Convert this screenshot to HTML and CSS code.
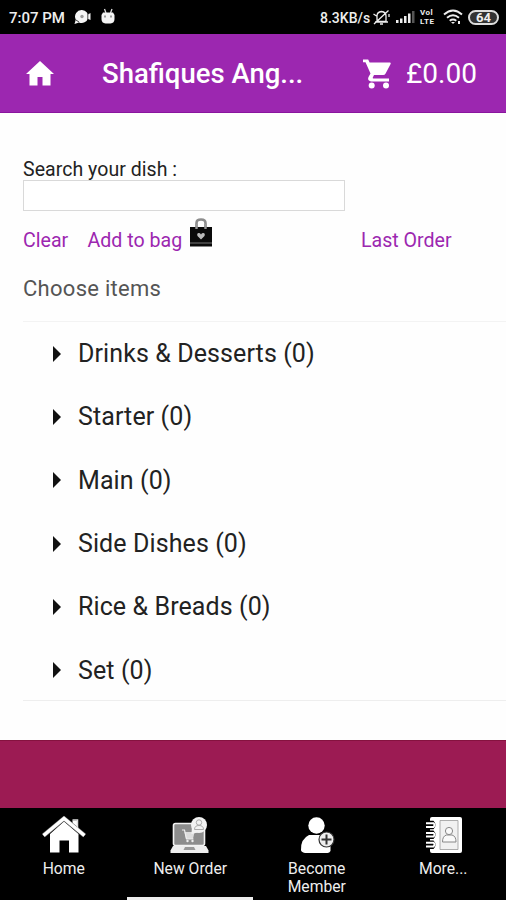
FILE: index.html
```html
<!DOCTYPE html>
<html lang="en">
<head>
<meta charset="utf-8">
<title>Shafiques Ang…</title>
<link rel="stylesheet" href="styles.css">
</head>
<body>
<div class="status">
  <span class="time">7:07 PM</span>
  <svg class="st-cam" width="17" height="16" viewBox="0 0 17 16"><path fill="#f4f4f4" d="M8 1a6.500 6.500 0 1 1-3 12.400L0.500 15l1.300-4.500A6.500 6.500 0 0 1 8 1z"/><path fill="#f4f4f4" d="M13 6l3.500-2v7L13 9.500z"/><circle cx="8" cy="7.500" r="1.700" fill="#999"/><path d="M2 11l3 2M13.800 4v7" stroke="#444"/></svg>
  <svg class="st-bot" width="14" height="17" viewBox="0 0 14 17"><path d="M3.500 1l1.500 4M11 1L9.500 5" stroke="#ddd" stroke-width="1.300"/><path fill="#f4f4f4" d="M2 4.500h10l1.500 2.500v4q0 4-4 4.500h-5Q.5 15 .5 11V7z"/><path d="M4 7.500v2M10 7.500v2" stroke="#777" stroke-width="1.400"/></svg>
  <span class="speed">8.3KB/s</span>
  <svg class="st-bell" width="17" height="17" viewBox="0 0 17 17" fill="none" stroke="#eee" stroke-width="1.300"><path d="M4 12.500V7q0-4 4.500-4.500Q13 3 13 7v5.500zM2 13h13M7 15h3M1 15L15.500 1.500M.5 5l3 2M16 5v3"/></svg>
  <svg class="st-signal" width="19" height="14" viewBox="0 0 19 14"><path fill="#eee" d="M0 10h2.500v3H0zM4 8.500h2.500V13H4zM8 6h2.500v7H8zM12 3.500h2.500V13H12z"/><path fill="#555" d="M16 1h2.500v12H16z"/></svg>
  <span class="volte"><span>Vol</span><span>LTE</span></span>
  <svg class="st-wifi" width="20" height="16" viewBox="0 0 20 16" fill="none" stroke="#eee" stroke-width="1.900"><path d="M1 5.500q9-8 18 0M4 8.800q6-5 12 0M6.700 11.700q3.300-2.500 6.600 0"/><path d="M8 13h4l-2 2z" fill="#eee" stroke="none"/><path d="M16 12v3" stroke-width="2"/></svg>
  <span class="battery">64</span>
</div>
<header class="bar">
  <svg class="bar-home" width="28" height="25" viewBox="0 0 28 25"><path fill="#fff" d="M14 0L0 13h3.500v11.500h8V16h5v8.500h8V13H28z"/></svg>
  <h1>Shafiques Ang...</h1>
  <svg class="bar-cart" width="30" height="30" viewBox="0 0 30 30"><path fill="#fff" d="M0 .5h5.200L6.600 3.500H27q1.200.2.600 1.600l-5 9.500q-.8 1.500-2.500 1.500H11L9.700 18.700q-.1.800.7.800H26v3H8q-4-1-2.500-4.500l2-3.500L2.500 3.300H0z"/><circle cx="8.700" cy="26.500" r="3" fill="#fff"/><circle cx="23" cy="26.500" r="3" fill="#fff"/></svg>
  <span class="total">£0.00</span>
</header>
<main>
  <label class="search-label" for="dish">Search your dish :</label>
  <input class="search" id="dish" type="text">
  <div class="links">
    <a class="clear">Clear</a><a class="add">Add to bag</a>
    <svg class="bag" width="22" height="30" viewBox="0 0 22 30"><path d="M6.500 12V5q0-3.500 4.500-3.500T15.500 5v7" fill="none" stroke="#8c8c8c" stroke-width="2.600"/><path fill="#0a0a0a" d="M0 9h22v19.500H0z"/><path stroke="#777" stroke-width="1" d="M0 25h22"/><path d="M6.500 11V6M15.500 11V6" stroke="#999" stroke-width="2.400"/><path fill="#bbb" d="M11 21.500L7.500 18q-1-2.600 1.200-3 1.500 0 2.300 1.400.8-1.400 2.300-1.400 2.200.4 1.200 3z"/></svg>
    <a class="last">Last Order</a>
  </div>
  <h2>Choose items</h2>
  <ul class="items">
    <li><i class="tri"></i><span>Drinks &amp; Desserts (0)</span></li>
    <li><i class="tri"></i><span>Starter (0)</span></li>
    <li><i class="tri"></i><span>Main (0)</span></li>
    <li><i class="tri"></i><span>Side Dishes (0)</span></li>
    <li><i class="tri"></i><span>Rice &amp; Breads (0)</span></li>
    <li><i class="tri"></i><span>Set (0)</span></li>
  </ul>
</main>
<div class="band"></div>
<nav>
  <a class="tab">
    <svg width="44" height="38" viewBox="0 0 44 38"><path fill="#fff" d="M30.500 4.500h5v11l-5-4.500zM8 18L22 5.500 36.500 18v18.500H27V24.500h-9.500v12H8z"/><path d="M1.500 19.500L22 2.500l20.500 17" fill="none" stroke="#777" stroke-width="4.400"/><path d="M1.500 19.500L22 2.500l20.500 17" fill="none" stroke="#fff" stroke-width="3.400"/><path d="M30.500 4h5v8" fill="none" stroke="#ddd" stroke-width="1.500"/></svg>
    <span>Home</span>
  </a>
  <a class="tab active">
    <svg width="44" height="38" viewBox="0 0 44 38"><rect x="5.500" y="7.500" width="31" height="22" rx="2" fill="#8d8d8d" stroke="#f3f3f3" stroke-width="1.600"/><path fill="#eee" d="M5 30h33l2.500 4.500v2.500h-38v-2.500z"/><path fill="#999" d="M17 31h9l1.500 3H15.500z"/><path fill="#ddd" d="M16.500 16h10l-1.500 7h-7z"/><path d="M14 14h2.500l2 9h7" fill="none" stroke="#eee" stroke-width="1.200"/><circle cx="19.500" cy="25" r="1.200" fill="#eee"/><circle cx="24.500" cy="25" r="1.200" fill="#eee"/><circle cx="31" cy="9" r="8" fill="#f2f2f2"/><path fill="#f2f2f2" d="M24 10l-.5 8 8-2z"/><circle cx="31" cy="6.500" r="2.700" fill="none" stroke="#aaa"/><path d="M26.500 13.500q0-4 4.500-4t4.500 4z" fill="none" stroke="#aaa"/></svg>
    <span>New Order</span>
  </a>
  <a class="tab">
    <svg width="44" height="38" viewBox="0 0 44 38"><circle cx="21.500" cy="9.500" r="8.200" fill="#fff"/><path fill="#fff" d="M6 34q-.5-11 8-15h15q5 2 6.500 7v9q-1 2-3 2H10q-4-1-4-3z"/><circle cx="31.500" cy="23.500" r="7.500" fill="#eee" stroke="#333" stroke-width="1.200"/><path d="M31.500 18.500v10M26.500 23.500h10" stroke="#333" stroke-width="2"/></svg>
    <span>Become<br>Member</span>
  </a>
  <a class="tab">
    <svg width="44" height="38" viewBox="0 0 44 38"><path fill="#fff" d="M11 1h28q2 0 2 2v32q0 2-2 2H11q-2 0-2-2V3q0-2 2-2z"/><path fill="#000" d="M4 4.700h8.500q4 4.300 0 8.600H4zM4 14.600h8.500q4 4.200 0 8.400H4zM4 24.400h8.500q4 4.300 0 8.600H4z"/><path d="M5 7.300h7.500q2 1.800 0 3.600H5M5 17h7.500q2 1.800 0 3.600H5M5 26.800h7.500q2 1.800 0 3.600H5" fill="none" stroke="#fff" stroke-width="2"/><path d="M19 4.500h18v29H19z" fill="#f1f1f1" stroke="#999" stroke-width=".8"/><circle cx="28" cy="15" r="3.600" fill="#fafafa" stroke="#888"/><path d="M21.500 26q0-6 4-7H31q4 1 4 7z" fill="#fafafa" stroke="#888"/></svg>
    <span>More...</span>
  </a>
</nav>
</body>
</html>
```
FILE: styles.css
```css
* { box-sizing: border-box; }
body {
  margin: 0;
  width: 506px;
  height: 900px;
  overflow: hidden;
  display: flex;
  flex-direction: column;
  background: #fefefe;
  font-family: Roboto, "Liberation Sans", sans-serif;
  color: #222;
  white-space: nowrap;
}
h1, h2, ul { margin: 0; padding: 0; }
svg { display: block; flex: none; }
.status {
  height: 34px;
  flex: none;
  display: flex;
  align-items: center;
  background: #000;
  color: #eee;
  padding-left: 9px;
}
.time { font-size: 15px; font-weight: 500; width: 65px; padding-top: 1px; }
.st-bot { margin-left: 10px; margin-top: -2px; }
.speed { font-size: 14px; font-weight: 500; width: 52px; margin-left: 205px; padding-top: 1px; }
.st-bell { margin-left: 1px; }
.st-signal { margin-left: 6px; }
.volte {
  display: flex;
  flex-direction: column;
  width: 17px;
  margin-left: 5px;
  font-size: 8px;
  line-height: 9px;
  font-weight: 700;
  letter-spacing: .5px;
}
.st-wifi { margin-left: 6px; }
.battery {
  width: 31px;
  height: 15px;
  margin-left: 5px;
  border: 2px solid #ddd;
  border-radius: 8px;
  background: #333;
  font-size: 13px;
  font-weight: 700;
  line-height: 11px;
  text-align: center;
}
.bar {
  height: 79px;
  flex: none;
  display: flex;
  align-items: center;
  background: #9c27b0;
  border-bottom: 1px solid #8a159e;
  color: #fff;
  padding-left: 26px;
}
.bar h1 { font-size: 27.500px; font-weight: 500; width: 261px; margin-left: 48px; }
.bar-cart { margin-top: 1px; }
.total { font-size: 28px; margin-left: 13px; }
main { height: 627px; flex: none; padding: 45px 0 0 23px; }
.search-label { display: block; font-size: 19.500px; line-height: 23px; margin-bottom: -1px; letter-spacing: .05px; }
.search {
  display: block;
  width: 322px;
  height: 31px;
  border: 1px solid #d9d9d9;
  background: #fff;
}
.links {
  display: flex;
  align-items: center;
  height: 30px;
  margin-top: 7px;
  font-size: 19.600px;
  color: #9c27b0;
}
.links a { padding-top: 14px; }
.clear { width: 64.500px; }
.add { width: 102.500px; }
.last { margin-left: 149px; }
h2 { font-size: 22px; line-height: 26px; font-weight: 400; letter-spacing: .28px; color: #555; margin-top: 28px; }
.items {
  list-style: none;
  height: 380px;
  margin-top: 19px;
  border-top: 1px solid #f3f3f3;
  border-bottom: 1px solid #eee;
  display: grid;
  grid-template-rows: repeat(6, 63.300px);
  font-size: 25px;
  letter-spacing: .1px;
}
.items li { display: flex; align-items: center; padding-left: 30px; }
.tri {
  width: 0;
  height: 0;
  border: solid transparent;
  border-width: 8px 0 8px 8px;
  border-left-color: #111;
  margin-right: 17px;
}
.band { height: 68px; flex: none; background: #9c1b53; border-top: 1px solid #85123f; }
nav { height: 92px; flex: none; display: flex; background: #000; color: #eee; }
.tab {
  width: 126.500px;
  display: flex;
  flex-direction: column;
  align-items: center;
  padding: 8px 0 0 1px;
  font-size: 15.700px;
  line-height: 18px;
  text-align: center;
}
.tab span { margin-top: 6px; }
.active { border-bottom: 3px solid #eee; }
```
